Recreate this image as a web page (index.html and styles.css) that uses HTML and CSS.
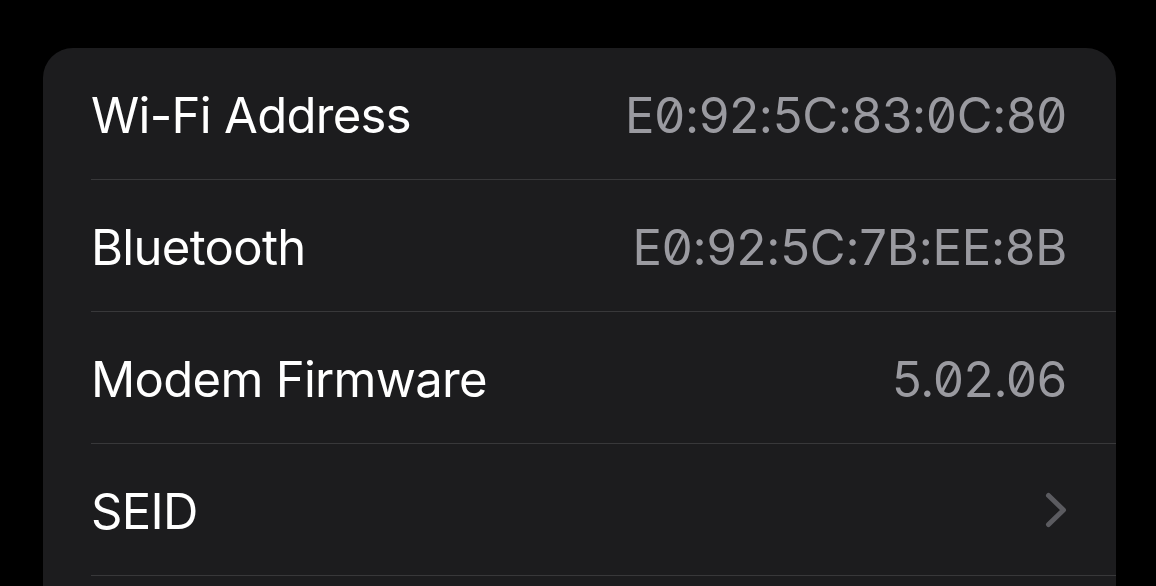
FILE: index.html
```html
<!DOCTYPE html>
<html lang="en">
<head>
<meta charset="utf-8">
<title>About</title>
<link rel="stylesheet" href="styles.css">
</head>
<body>
<div class="page">
  <section class="card">
    <div class="row">
      <div class="row-inner">
        <span class="label">Wi-Fi Address</span>
        <span class="value">E0:92:5C:83:0C:80</span>
      </div>
    </div>
    <div class="row">
      <div class="row-inner">
        <span class="label">Bluetooth</span>
        <span class="value">E0:92:5C:7B:EE:8B</span>
      </div>
    </div>
    <div class="row">
      <div class="row-inner">
        <span class="label">Modem Firmware</span>
        <span class="value">5.02.06</span>
      </div>
    </div>
    <div class="row">
      <div class="row-inner">
        <span class="label">SEID</span>
        <svg class="chevron" width="22" height="36" viewBox="0 0 22 36" aria-hidden="true">
          <path d="M3.5 3.5 L18.5 18 L3.5 32.5" fill="none" stroke="currentColor" stroke-width="5" stroke-linecap="round" stroke-linejoin="round"/>
        </svg>
      </div>
    </div>
    <div class="row row-last"></div>
  </section>
</div>
</body>
</html>
```

FILE: styles.css
```css
html, body {
  margin: 0;
  padding: 0;
  background: #000;
  height: 100%;
  overflow: hidden;
}

.page {
  padding: 48px 0 0 43px;
}

.card {
  width: 1073px;
  background: #1c1c1e;
  border-radius: 30px 30px 0 0;
  font-family: Inter, "Noto Sans", sans-serif;
}

.row {
  padding-left: 48px;
  height: 132px;
}

.row-last {
  height: 10px;
}

.row-inner {
  box-sizing: border-box;
  height: 132px;
  padding-top: 3px;
  border-bottom: 1px solid #38383a;
  display: flex;
  align-items: center;
  justify-content: space-between;
  padding-right: 49px;
}

.label {
  color: #ffffff;
  font-size: 49px;
  letter-spacing: -0.7px;
}

.value {
  color: #9a9aa0;
  font-size: 49px;
  letter-spacing: -0.2px;
  font-feature-settings: "zero" 1;
}

.chevron {
  color: #5b5b60;
  display: block;
  margin-top: -3px;
}
```
